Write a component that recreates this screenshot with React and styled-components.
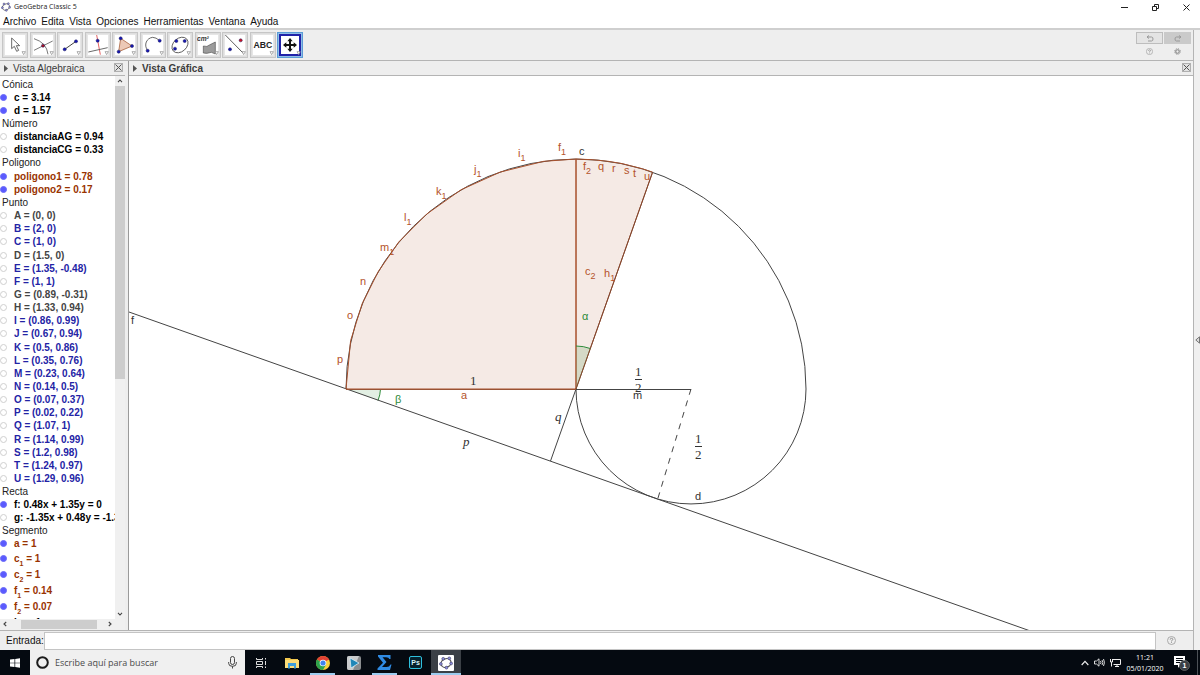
import React from 'react';
import styled, { createGlobalStyle, css } from 'styled-components';

const Global = createGlobalStyle`
  *, *::before, *::after { box-sizing: border-box; }
  body { margin: 0; background: #fff; }
  button, input { font: inherit; color: inherit; }
  button { padding: 0; border: 0; background: none; }
  svg { display: block; }
`;

const line = '#b4b4b4';
const panel = '#eeeeee';

const Shell = styled.div`
  height: 100vh;
  display: flex;
  flex-direction: column;
  overflow: hidden;
  font: 10px/13px "Liberation Sans", Arial, sans-serif;
  color: #111;
`;

const TitleBar = styled.header`
  flex: none;
  height: 14px;
  display: flex;
  align-items: center;
  gap: 3px;
  padding-left: 1px;
  font: 8px/12px "Open Sans", sans-serif;
  color: #222;
`;

const AppTitle = styled.h1`
  margin: 0;
  flex: 1;
  font: inherit;
  font-size: 7px;
`;

const WindowButton = styled.button`
  width: 28px;
  height: 14px;
  display: grid;
  place-items: center;
`;

const MenuBar = styled.nav`
  flex: none;
  height: 16px;
  display: flex;
  align-items: center;
  gap: 5px;
  padding: 2px 0 0 3px;
  border-bottom: 2px solid #cfcfcf;
`;

const MenuButton = styled.button`
  line-height: 12px;
  white-space: nowrap;
`;

const Work = styled.div`
  flex: 1;
  min-height: 0;
  display: flex;
`;

const Main = styled.div`
  flex: 1;
  min-width: 0;
  display: flex;
  flex-direction: column;
`;

const SideStrip = styled.button`
  flex: none;
  width: 7px;
  border-left: 1px solid ${line};
  background: #f0f0f0;
  display: flex;
  align-items: center;
  justify-content: flex-end;
`;

const Toolbar = styled.div`
  flex: none;
  height: 31px;
  display: flex;
  justify-content: space-between;
  padding: 2px;
  background: ${panel};
  border-bottom: 1px solid ${line};
`;

const Tools = styled.div`
  width: 303px;
  display: grid;
  grid-template-columns: repeat(11, 1fr);
`;

const ToolButton = styled.button`
  width: 26px;
  height: 26px;
  padding: 1px;
  border: 1px solid #c6c6c6;
  background: #dedede;
  ${p => p.$active && css`
    border-color: #5b9bd5;
    background: #8fbde8;
  `}
`;

const ToolFace = styled.span`
  display: block;
  width: 22px;
  height: 22px;
  background: #fff;
  border: 1px solid #e6e6e6;
  ${p => p.$active && css`border: 2px solid #2222a8;`}
  svg { margin: ${p => (p.$active ? '-2px' : '-1px')}; }
`;

const SideActions = styled.div`
  display: grid;
  grid-template-columns: 27px 27px;
  grid-template-rows: 12px 12px;
  column-gap: 1px;
  row-gap: 1px;
`;

const SmallAction = styled.button`
  display: grid;
  place-items: center;
  ${p => p.$boxed && css`border: 1px solid #bdbdbd; background: #e4e4e4;`}
  ${p => p.$pressed && css`border: 1px solid #cacaca; background: #cacaca;`}
`;

const Views = styled.div`
  flex: 1;
  min-height: 0;
  display: flex;
`;

const View = styled.section`
  display: flex;
  flex-direction: column;
  min-width: 0;
  ${p => (p.$fixed
    ? css`flex: none; width: 125px;`
    : css`flex: 1;`)}
`;

const Divider = styled.div`
  flex: none;
  width: 4px;
  background: ${panel};
  border-right: 1px solid #9a9a9a;
`;

const ViewHead = styled.div`
  flex: none;
  height: 15px;
  display: flex;
  align-items: center;
  gap: 5px;
  padding: 0 2px 0 4px;
  background: ${panel};
  border-bottom: 1px solid ${line};
`;

const ViewTitle = styled.h2`
  margin: 0;
  padding-top: 1px;
  flex: 1;
  font-size: 10px;
  line-height: 13px;
  font-weight: ${p => (p.$bold ? 'bold' : 'normal')};
  color: #3c3c3c;
`;

const CloseButton = styled.button`
  width: 9px;
  height: 9px;
  margin-bottom: 2px;
  border: 1px solid #b0b0b0;
  background: #e2e2e2;
`;

const AlgebraBody = styled.div`
  flex: 1;
  min-height: 0;
  display: grid;
  grid-template-columns: 1fr 10px;
  grid-template-rows: 1fr 11px;
`;

const Tree = styled.div`
  min-width: 0;
  min-height: 0;
  overflow: hidden;
  padding-top: 2px;
  background: #fff;
`;

const Group = styled.div`
  height: ${p => (p.$height ? `${p.$height}px` : 'auto')};
  display: flex;
  flex-direction: column;
  justify-content: space-between;
`;

const GroupTitle = styled.h3`
  margin: 0;
  padding-left: 2px;
  font: inherit;
  color: #222;
`;

const Entry = styled.label`
  display: flex;
  align-items: center;
  gap: 7px;
  height: ${p => (p.$tall ? 16 : 13)}px;
  font-weight: bold;
  white-space: nowrap;
  color: ${p => p.$color};
  sub { font-size: 7px; line-height: 0; vertical-align: -4px; }
`;

const Marble = styled.input.attrs({ type: 'checkbox' })`
  appearance: none;
  flex: none;
  width: 7px;
  height: 7px;
  margin: 0;
  border: 1px solid #cfcfcf;
  border-radius: 50%;
  background: #fff;
  &:checked { background: #5a5aff; border-color: #6a6af8; }
`;

const Scroll = styled.div`
  display: flex;
  flex-direction: ${p => (p.$across ? 'row' : 'column')};
  align-items: stretch;
  background: #f0f0f0;
`;

const ScrollButton = styled.button`
  flex: none;
  width: 10px;
  height: 10px;
  display: grid;
  place-items: center;
`;

const Track = styled.div`
  flex: 1;
  display: flex;
  flex-direction: inherit;
  ${p => p.$across && css`padding: 1px 0 1px 11px;`}
`;

const Thumb = styled.div`
  flex: 0 0 ${p => p.$size};
  background: #cdcdcd;
`;

const Corner = styled.div`background: #f0f0f0;`;

const Canvas = styled.div`
  flex: 1;
  min-height: 0;
  background: #fff;
  overflow: hidden;
  > svg { width: 100%; height: 100%; }
`;

const InputBar = styled.form`
  flex: none;
  height: 20px;
  display: flex;
  align-items: center;
  padding-left: 6px;
  background: ${panel};
  border-top: 1px solid ${line};
`;

const CommandInput = styled.input`
  flex: 1;
  min-width: 0;
  height: 18px;
  padding: 0 3px;
  border: 1px solid #c4c4c4;
  background: #fff;
  outline: 0;
`;

const HelpButton = styled.button`
  width: 37px;
  padding-right: 6px;
  display: grid;
  place-items: center;
`;

const Taskbar = styled.footer`
  flex: none;
  height: 25px;
  display: flex;
  background: #050a11;
  color: #fff;
`;

const StartButton = styled.button`
  width: 30px;
  display: grid;
  place-items: center;
`;

const Search = styled.label`
  width: 215px;
  display: flex;
  align-items: center;
  gap: 6px;
  padding: 0 8px 0 6px;
  background: #f0f0f0;
`;

const SearchInput = styled.input`
  flex: 1;
  min-width: 0;
  padding: 0;
  border: 0;
  outline: 0;
  background: none;
  font: 9px/14px "Open Sans", sans-serif;
  color: #444;
  &::placeholder { color: #4a4a4a; opacity: 1; }
`;

const TaskButton = styled.button`
  width: ${p => (p.$active ? 30 : 31)}px;
  display: grid;
  place-items: center;
  background: ${p => (p.$active ? '#3b4046' : 'transparent')};
  ${p => p.$open && css`
    background-image: linear-gradient(#9ccbee, #9ccbee);
    background-size: ${p.$active ? '100%' : '25px'} 2px;
    background-position: center bottom;
    background-repeat: no-repeat;
  `}
`;

const Tray = styled.div`
  margin-left: auto;
  display: flex;
  align-items: center;
`;

const TrayButton = styled.button`
  width: ${p => p.$w}px;
  height: 25px;
  display: grid;
  place-items: center;
`;

const Clock = styled.time`
  width: 44px;
  font: 7px/11px "Open Sans", sans-serif;
  text-align: center;
`;

const DesktopEdge = styled.button`
  width: 3px;
  height: 25px;
  border-left: 1px solid #4c5157;
`;

const GeoLogo = ({ size, color }) => (
  <svg width={size} height={size} viewBox="0 0 30 30">
    <ellipse cx="15" cy="15" rx="11" ry="9" transform="rotate(-22 15 15)" fill="none" stroke={color} strokeWidth="2.4" />
    {[[9, 6], [22, 5], [26, 16], [16, 25], [4, 17]].map(([x, y]) => (
      <circle key={x} cx={x} cy={y} r="3" fill="#8f8fe0" stroke="#44446a" strokeWidth="1.4" />
    ))}
  </svg>
);

const Dot = ({ x, y, fill = '#1616b4' }) => (
  <circle cx={x} cy={y} r="4.6" fill={fill} stroke="#202060" strokeWidth="1.6" />
);

const toolDrawings = {
  Mueve: <path d="M23 12v32l8-7 7 15 6-3-7-14h10z" fill="#fff" stroke="#444" strokeWidth="2.4" />,
  'Intersección': (
    <>
      <path d="M62 21 6 49M6 14Q44 26 48 61" fill="none" stroke="#555" strokeWidth="2.4" />
      <Dot x={33} y={35} fill="#b01020" />
    </>
  ),
  Segmento: (
    <>
      <path d="M17 46 51 22" stroke="#333" strokeWidth="2.8" />
      <Dot x={17} y={46} /><Dot x={51} y={22} />
    </>
  ),
  Perpendicular: (
    <>
      <path d="M29 3 40 62" stroke="#e25858" strokeWidth="2.8" />
      <path d="M4 54 62 41" stroke="#555" strokeWidth="2.6" />
      <Dot x={32} y={20} />
    </>
  ),
  'Polígono': (
    <>
      <path d="M20 13 54 36 14 53z" fill="#ecc9b6" stroke="#a8623e" strokeWidth="2.4" />
      <Dot x={20} y={13} /><Dot x={54} y={36} /><Dot x={14} y={53} />
    </>
  ),
  Arco: (
    <>
      <path d="M17 50C4 32 14 12 32 10Q42 10 53 20" fill="none" stroke="#444" strokeWidth="2.4" />
      <Dot x={17} y={50} /><Dot x={53} y={20} />
    </>
  ),
  'Cónica': (
    <>
      <ellipse cx="33" cy="33" rx="27" ry="20" transform="rotate(-42 33 33)" fill="none" stroke="#444" strokeWidth="2.4" />
      <Dot x={22} y={21} /><Dot x={47} y={21} /><Dot x={18} y={44} />
    </>
  ),
  'Área': (
    <>
      <text x="0" y="20" fontSize="20" fontStyle="italic" fontWeight="bold" fill="#333">cm²</text>
      <path d="M19 36q12 4 18-3l18-9v36l-12-5q-14 5-24 2z" fill="#9b9b9b" stroke="#444" strokeWidth="1.8" />
    </>
  ),
  'Simetría': (
    <>
      <path d="M4 3 60 60" stroke="#444" strokeWidth="2.6" />
      <Dot x={50} y={19} fill="#d01020" /><Dot x={18} y={46} />
    </>
  ),
  Texto: <text x="33" y="43" textAnchor="middle" fontSize="26" fontWeight="bold" fill="#222">ABC</text>,
  Desplaza: (
    <path d="M33 12 41 22H36V30H44V25L54 33 44 41V36H36V44H41L33 54 25 44H30V36H22V41L12 33 22 25V30H30V22H25z" fill="#111" />
  ),
};

const blue = '#2323a5';
const grey = '#444';
const brown = '#993300';

const groups = [
  { title: 'Cónica', height: 39, rows: [['c = 3.14', 1, '#000'], ['d = 1.57', 1, '#000']] },
  { title: 'Número', height: 39, rows: [['distanciaAG = 0.94', 0, '#000'], ['distanciaCG = 0.33', 0, '#000']] },
  { title: 'Poligono', height: 40, rows: [['poligono1 = 0.78', 1, brown], ['poligono2 = 0.17', 1, brown]] },
  {
    title: 'Punto',
    height: 289,
    rows: [
      ['A = (0, 0)', 0, grey], ['B = (2, 0)', 0, blue], ['C = (1, 0)', 0, blue], ['D = (1.5, 0)', 0, grey],
      ['E = (1.35, -0.48)', 0, blue], ['F = (1, 1)', 0, blue], ['G = (0.89, -0.31)', 0, grey],
      ['H = (1.33, 0.94)', 0, grey], ['I = (0.86, 0.99)', 0, blue], ['J = (0.67, 0.94)', 0, blue],
      ['K = (0.5, 0.86)', 0, blue], ['L = (0.35, 0.76)', 0, blue], ['M = (0.23, 0.64)', 0, blue],
      ['N = (0.14, 0.5)', 0, blue], ['O = (0.07, 0.37)', 0, blue], ['P = (0.02, 0.22)', 0, blue],
      ['Q = (1.07, 1)', 0, blue], ['R = (1.14, 0.99)', 0, blue], ['S = (1.2, 0.98)', 0, blue],
      ['T = (1.24, 0.97)', 0, blue], ['U = (1.29, 0.96)', 0, blue],
    ],
  },
  { title: 'Recta', height: 39, rows: [['f: 0.48x + 1.35y = 0', 1, '#000'], ['g: -1.35x + 0.48y = -1.35', 0, '#000']] },
  {
    title: 'Segmento',
    rows: [
      ['a = 1', 1, brown], ['c_1 = 1', 1, brown], ['c_2 = 1', 1, brown],
      ['f_1 = 0.14', 1, brown], ['f_2 = 0.07', 1, brown], ['h_1 = 1', 1, '#000'],
    ],
  },
];

const EntryText = ({ text }) => {
  const m = text.match(/^(\w)_(\d)(.*)$/);
  return m ? <span>{m[1]}<sub>{m[2]}</sub>{m[3]}</span> : <span>{text}</span>;
};

/* Construction coordinates to canvas pixels. */
const UNIT = 230;
const px = ([x, y]) => [217 + x * UNIT, 313 - y * UNIT];
const points = list => list.map(p => px(p).join(',')).join(' ');

const sectorLeft = [[0, 0], [0.02, 0.21], [0.07, 0.37], [0.14, 0.51], [0.23, 0.64], [0.35, 0.76], [0.5, 0.866], [0.67, 0.943], [0.86, 0.99], [1, 1], [1, 0]];
const sectorRight = [[1, 0], [1, 1], [1.07, 0.997], [1.14, 0.99], [1.2, 0.98], [1.24, 0.97], [1.29, 0.957], [1.333, 0.943]];

const rust = '#b4532a';
const labels = [
  ['f', 429, 75, rust, '1'], ['i', 389, 81, rust, '1'], ['j', 345, 97, rust, '1'], ['k', 307, 119, rust, '1'],
  ['l', 275, 145, rust, '1'], ['m', 251, 175, rust, '1'], ['n', 231, 209, rust], ['o', 218, 243, rust],
  ['p', 208, 287, rust], ['c', 450, 79, '#333'], ['f', 454, 94, rust, '2'], ['q', 469, 94, rust],
  ['r', 483, 96, rust], ['s', 495, 98, rust], ['t', 504, 101, rust], ['u', 515, 104, rust],
  ['c', 456, 199, rust, '2'], ['h', 475, 201, rust, '1'], ['α', 453, 244, '#2e8b3a'], ['β', 266, 327, '#2e8b3a'],
  ['a', 332, 323, rust], ['m', 504, 323, '#333'], ['d', 566, 424, '#333'], ['f', 2, 248, '#333'],
];

const Serif = styled.g`
  font-family: "Liberation Serif", "Times New Roman", serif;
  font-size: 13px;
  fill: #333;
`;

const Drawing = () => (
  <svg role="img" aria-label="Construcción geométrica">
    <path d="M217 313H251.500A34 34 0 0 1 249 324.500z" fill="#e2efe3" />
    <path d="M251.500 313A34 34 0 0 1 249 324.500" fill="none" stroke="#2e8b3a" />
    <g fill="none" stroke="#444" strokeWidth="1">
      <path d="M217 313A230 230 0 0 1 677 313" />
      <path d="M447 313A115 115 0 0 0 677 313" />
      <path d="M0 236 900 554.5" />
      <path d="M447 313.5H562" />
      <path d="M447 313 421.500 385" />
      <path d="M562 313 529 422" strokeDasharray="6 6" />
    </g>
    <g fill="#993300" fillOpacity="0.1" stroke="#a8502c" strokeWidth="1">
      <polygon points={points(sectorLeft)} />
      <polygon points={points(sectorRight)} />
    </g>
    <path d="M217 313.5H447" stroke="#995233" />
    <path d="M447 313 523.667 96.100" stroke="#7c4630" />
    <path d="M447 313V270A43 43 0 0 1 461.300 272.500z" fill="#64a05a" fillOpacity="0.22" />
    <path d="M447 270A43 43 0 0 1 461.300 272.500" fill="none" stroke="#2e8b3a" />
    {labels.map(([t, x, y, fill, sub], i) => (
      <text key={i} x={x} y={y} fontSize="11" fill={fill}>
        {t}{sub && <tspan dy="4" fontSize="9">{sub}</tspan>}
      </text>
    ))}
    <Serif>
      <text x="341" y="309">1</text>
      <text x="506" y="300">1</text>
      <text x="506" y="316">2</text>
      <text x="566" y="367">1</text>
      <text x="566" y="383">2</text>
      <text x="426" y="345" fontStyle="italic">q</text>
      <text x="334" y="370" fontStyle="italic">p</text>
      <path d="M506 303.5H513M566 370.5H573" stroke="#333" />
    </Serif>
  </svg>
);

const Fold = () => <svg width="4" height="7" viewBox="0 0 4 7"><path d="M0 0 4 3.500 0 7z" fill="#555" /></svg>;

const Cross = ({ size = 7, color = '#555' }) => (
  <svg width={size} height={size} viewBox="0 0 7 7"><path d="M.5.5l6 6m0-6-6 6" stroke={color} fill="none" /></svg>
);

const Chevron = ({ turn, color = '#444', size = 6, weight = 1.1 }) => (
  <svg width={size} height={size} viewBox="0 0 6 6">
    <path d="M1 4.200 3 2 5 4.200" transform={`rotate(${turn} 3 3)`} fill="none" stroke={color} strokeWidth={weight} />
  </svg>
);

const Help = ({ size }) => (
  <svg width={size} height={size} viewBox="0 0 9 9">
    <circle cx="4.500" cy="4.500" r="4" fill="none" stroke="#999" strokeWidth=".8" />
    <path d="M3.200 3.600q0-1.300 1.300-1.300t1.300 1.200q0 .7-1.300 1.300v.6M4.500 6.200v.8" fill="none" stroke="#888" strokeWidth=".9" />
  </svg>
);

const taskApps = [
  ['Vista de tareas', false, (
    <svg width="12" height="12" viewBox="0 0 12 12" fill="none" stroke="#ddd">
      <path d="M1.500 1v1.500h6V1M1.500 11V9.500h6V11M1.500 4.500h6v3h-6zM10.500 1v1.500M10.500 4v4M10.500 9.500V11" />
    </svg>
  )],
  ['Explorador', false, (
    <svg width="14" height="12" viewBox="0 0 14 12">
      <path d="M0 1h5l1 1h7v9H0z" fill="#f2c84e" /><path d="M0 3h14v8H0z" fill="#fbdc78" />
      <path d="M3 6h8v5.500H9V9H5v2.500H3z" fill="#3d9ddb" />
    </svg>
  )],
  ['Chrome', true, (
    <svg width="14" height="14" viewBox="0 0 14 14">
      <circle cx="7" cy="7" r="7" fill="#f9cf3c" />
      <path d="M7 7 .94 3.500A7 7 0 0 1 13.060 3.500z" fill="#e34133" />
      <path d="M7 7 .94 3.500A7 7 0 0 0 7 14l3-5.200z" fill="#2ba24c" />
      <path d="M7 3.500h6.060" stroke="#e34133" />
      <circle cx="7" cy="7" r="3.300" fill="#fff" /><circle cx="7" cy="7" r="2.600" fill="#3f83ee" />
    </svg>
  )],
  ['Reproductor', false, (
    <svg width="14" height="14" viewBox="0 0 14 14">
      <rect width="14" height="14" rx="2" fill="#8a8d8f" /><path d="M0 8V2q0-2 2-2h10L6 14H2q-2 0-2-2z" fill="#c9cbcc" />
      <path d="M3 2 12 7 4 12z" fill="#2087b8" stroke="#e7f5fb" strokeWidth=".7" />
    </svg>
  )],
  ['Sumatorio', true, (
    <svg width="15" height="15" viewBox="0 0 15 15">
      <path d="M1 0h12.500v4h-1.200Q12 2.300 9 2.300H5.500L9.500 7 5 12h4.500q3 0 4-2.500h1L13 15H.5v-1.500L6 7.800 1 1.500z" fill="#2f8be4" />
    </svg>
  )],
  ['Photoshop', false, (
    <svg width="13" height="13" viewBox="0 0 13 13">
      <rect x=".5" y=".5" width="12" height="12" rx="1.500" fill="#05202c" stroke="#2fc0dd" />
      <text x="6.500" y="9" textAnchor="middle" fontSize="7" fontWeight="bold" fill="#d6f3fb">Ps</text>
    </svg>
  )],
];

export default function App() {
  return (
    <Shell>
      <Global />
      <TitleBar>
        <GeoLogo size={10} color="#666" />
        <AppTitle>GeoGebra Classic 5</AppTitle>
        <WindowButton aria-label="Minimizar">
          <svg width="7" height="7"><path d="M0 3.500h7" stroke="#222" /></svg>
        </WindowButton>
        <WindowButton aria-label="Restaurar">
          <svg width="7" height="7"><path d="M.5 2.500h4v4h-4zM2.500 2V.5h4v4H5" fill="none" stroke="#222" /></svg>
        </WindowButton>
        <WindowButton aria-label="Cerrar"><Cross color="#222" /></WindowButton>
      </TitleBar>
      <MenuBar>
        {['Archivo', 'Edita', 'Vista', 'Opciones', 'Herramientas', 'Ventana', 'Ayuda'].map(m => (
          <MenuButton key={m}>{m}</MenuButton>
        ))}
      </MenuBar>

      <Work>
        <Main>
          <Toolbar>
            <Tools>
              {Object.entries(toolDrawings).map(([name, art]) => {
                const active = name === 'Desplaza';
                return (
                  <ToolButton key={name} aria-label={name} $active={active}>
                    <ToolFace $active={active}>
                      <svg width="22" height="22" viewBox="0 0 66 66">
                        {art}
                        <path d="M54 53h10l-5 9z" fill="#fff" stroke="#888" strokeWidth="2" />
                      </svg>
                    </ToolFace>
                  </ToolButton>
                );
              })}
            </Tools>
            <SideActions>
              <SmallAction $boxed aria-label="Deshacer">
                <svg width="8" height="7" viewBox="0 0 8 7"><path d="M3 .5 1 2l2 1.500M1 2h4.500q1.500 0 1.500 2t-1.500 2H2" fill="none" stroke="#999" /></svg>
              </SmallAction>
              <SmallAction $pressed aria-label="Rehacer">
                <svg width="8" height="7" viewBox="0 0 8 7"><path d="M5 .5 7 2 5 3.500M7 2H2.500Q1 2 1 4t1.500 2H6" fill="none" stroke="#999" /></svg>
              </SmallAction>
              <SmallAction aria-label="Ayuda"><Help size={7} /></SmallAction>
              <SmallAction aria-label="Preferencias">
                <svg width="7" height="7" viewBox="0 0 8 8" fill="none" stroke="#8a8a8a">
                  <circle cx="4" cy="4" r="2" strokeWidth="1.300" />
                  <circle cx="4" cy="4" r="3.300" strokeDasharray="1.300 1.300" />
                </svg>
              </SmallAction>
            </SideActions>
          </Toolbar>

          <Views>
            <View $fixed>
              <ViewHead>
                <Fold />
                <ViewTitle>Vista Algebraica</ViewTitle>
                <CloseButton aria-label="Cerrar vista algebraica"><Cross /></CloseButton>
              </ViewHead>
              <AlgebraBody>
                <Tree>
                  {groups.map(g => (
                    <Group key={g.title} $height={g.height}>
                      <GroupTitle>{g.title}</GroupTitle>
                      {g.rows.map(([text, on, color]) => (
                        <Entry key={text} $color={color} $tall={text.includes('_')}>
                          <Marble defaultChecked={!!on} />
                          <EntryText text={text} />
                        </Entry>
                      ))}
                    </Group>
                  ))}
                </Tree>
                <Scroll>
                  <ScrollButton aria-label="Subir"><Chevron turn={0} /></ScrollButton>
                  <Track><Thumb $size="56%" /></Track>
                  <ScrollButton aria-label="Bajar"><Chevron turn={180} /></ScrollButton>
                </Scroll>
                <Scroll $across>
                  <ScrollButton aria-label="Izquierda"><Chevron turn={-90} /></ScrollButton>
                  <Track $across><Thumb $size="91%" /></Track>
                  <ScrollButton aria-label="Derecha"><Chevron turn={90} /></ScrollButton>
                </Scroll>
                <Corner />
              </AlgebraBody>
            </View>
            <Divider />
            <View>
              <ViewHead>
                <Fold />
                <ViewTitle $bold>Vista Gráfica</ViewTitle>
                <CloseButton aria-label="Cerrar vista gráfica"><Cross /></CloseButton>
              </ViewHead>
              <Canvas><Drawing /></Canvas>
            </View>
          </Views>

          <InputBar onSubmit={e => e.preventDefault()}>
            <label htmlFor="command">Entrada:</label>
            <CommandInput id="command" autoComplete="off" />
            <HelpButton type="button" aria-label="Ayuda de entrada"><Help size={9} /></HelpButton>
          </InputBar>
        </Main>
        <SideStrip aria-label="Mostrar panel lateral">
          <svg width="5" height="8" viewBox="0 0 5 8"><path d="M4.500.8v6.400L.8 4z" fill="#ddd" stroke="#777" /></svg>
        </SideStrip>
      </Work>

      <Taskbar>
        <StartButton aria-label="Inicio">
          <svg width="10" height="10" viewBox="0 0 10 10" fill="#fff"><path d="M0 1.500 4.500 1v3.700H0zM5.200.9 10 .2v4.500H5.200zM0 5.300h4.500V9L0 8.500zM5.200 5.300H10v4.500l-4.800-.7z" /></svg>
        </StartButton>
        <Search>
          <svg width="13" height="13"><circle cx="6.500" cy="6.500" r="5.300" fill="none" stroke="#1c1c1c" strokeWidth="2" /></svg>
          <SearchInput aria-label="Buscar" placeholder="Escribe aquí para buscar" />
          <svg width="9" height="13" viewBox="0 0 9 13" fill="none" stroke="#444">
            <rect x="2.500" y=".5" width="4" height="8" rx="2" /><path d="M.7 6v1.500q0 2.800 3.800 2.800t3.800-2.800V6M4.500 10.300V12.500" />
          </svg>
        </Search>
        {taskApps.map(([name, open, icon]) => (
          <TaskButton key={name} aria-label={name} $open={open}>{icon}</TaskButton>
        ))}
        <TaskButton aria-label="GeoGebra" $open $active>
          <svg width="16" height="16" viewBox="0 0 16 16">
            <rect width="16" height="16" rx="1" fill="#fff" />
            <svg x="1" y="1" width="14" height="14"><GeoLogo size={14} color="#555" /></svg>
          </svg>
        </TaskButton>
        <Tray>
          <TrayButton $w={15} aria-label="Iconos ocultos"><Chevron turn={0} color="#eee" size={10} weight={0.7} /></TrayButton>
          <TrayButton $w={15} aria-label="Volumen">
            <svg width="11" height="9" viewBox="0 0 11 9" fill="none" stroke="#eee" strokeWidth=".9">
              <path d="M.5 3h2L5 .8v7.400L2.500 6h-2zM6.500 3q1 1.500 0 3M8 2q1.800 2.500 0 5M9.500 1q2 3.500 0 7" />
            </svg>
          </TrayButton>
          <TrayButton $w={16} aria-label="Red">
            <svg width="11" height="9" viewBox="0 0 11 9" fill="none" stroke="#eee">
              <path d="M3 1.500h7.500v5H3.500M.5 1v3h2V1M1.500 4v4.500M5 8.500h4M7 6.500v2" />
            </svg>
          </TrayButton>
          <Clock>11:21<br />05/01/2020</Clock>
          <TrayButton $w={30} aria-label="Notificaciones">
            <svg width="16" height="16" viewBox="0 0 16 16">
              <path d="M0 1h11v9H6l-2 3v-3H0z" fill="#fff" />
              <path d="M2 3.500h7M2 5.500h7M2 7.500h4" stroke="#050a11" />
              <circle cx="10.500" cy="10.500" r="5" fill="#3a3e44" stroke="#777" strokeWidth=".7" />
              <text x="10.500" y="13" textAnchor="middle" fontSize="7" fontWeight="bold" fill="#fff">1</text>
            </svg>
          </TrayButton>
          <DesktopEdge aria-label="Mostrar escritorio" />
        </Tray>
      </Taskbar>
    </Shell>
  );
}
